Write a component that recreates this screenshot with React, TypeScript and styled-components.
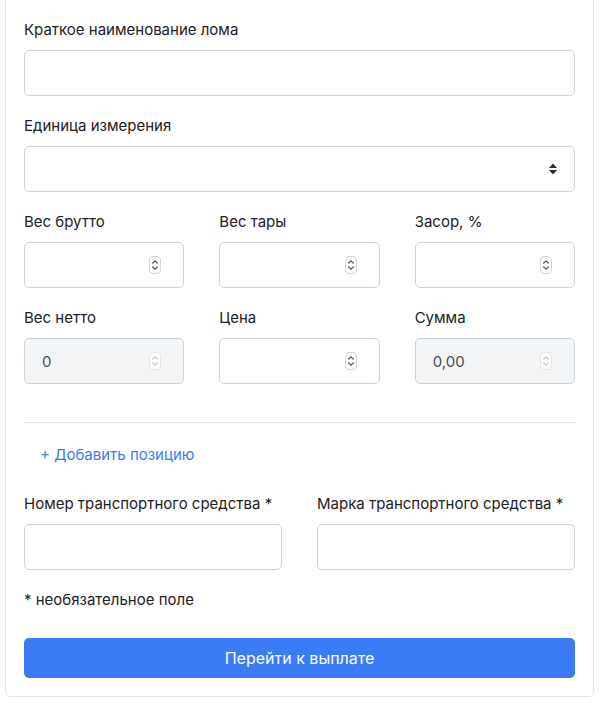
import styled, { createGlobalStyle } from "styled-components";

const GlobalStyle = createGlobalStyle`
  body {
    margin: 0;
    background: #ffffff;
    font-family: Inter, "Noto Sans", sans-serif;
    color: #1d2024;
  }
`;

const Stepper = ({ muted }: { muted?: boolean }) => (
  <svg width="12" height="18" viewBox="0 0 12 18">
    <rect x="0.5" y="0.5" width="11" height="17" rx="3.5" fill="#fdfdfd" stroke={muted ? "#e3e5e8" : "#d3d6da"} />
    <path d="M3.6 7.2 L6 4.8 L8.4 7.2" fill="none" stroke={muted ? "#c4c7cb" : "#4a4d52"} strokeWidth="1.2" strokeLinecap="round" strokeLinejoin="round" />
    <path d="M3.6 10.8 L6 13.2 L8.4 10.8" fill="none" stroke={muted ? "#c4c7cb" : "#4a4d52"} strokeWidth="1.2" strokeLinecap="round" strokeLinejoin="round" />
  </svg>
);

const SelectArrows = () => (
  <svg width="8" height="12" viewBox="0 0 8 12">
    <polygon points="0,5 4,0.5 8,5" fill="#2b2d31" />
    <polygon points="0,7 8,7 4,11.5" fill="#2b2d31" />
  </svg>
);

const NumberField = ({ label, value }: { label: string; value?: string }) => (
  <Field>
    <Label>{label}</Label>
    <NumberBox disabled={value !== undefined}>
      <BareInput defaultValue={value} disabled={value !== undefined} />
      <Stepper muted={value !== undefined} />
    </NumberBox>
  </Field>
);

export default function App() {
  return (
    <>
      <GlobalStyle />
      <Card>
        <Field>
          <Label>Краткое наименование лома</Label>
          <TextInput />
        </Field>
        <Field>
          <Label>Единица измерения</Label>
          <SelectBox>
            <BareSelect>
              <option></option>
            </BareSelect>
            <SelectArrows />
          </SelectBox>
        </Field>
        <Grid cols={3}>
          <NumberField label="Вес брутто" />
          <NumberField label="Вес тары" />
          <NumberField label="Засор, %" />
          <NumberField label="Вес нетто" value="0" />
          <NumberField label="Цена" />
          <NumberField label="Сумма" value="0,00" />
        </Grid>
        <Divider />
        <AddLink>+ Добавить позицию</AddLink>
        <Grid cols={2}>
          <Field>
            <Label>Номер транспортного средства *</Label>
            <TextInput />
          </Field>
          <Field>
            <Label>Марка транспортного средства *</Label>
            <TextInput />
          </Field>
        </Grid>
        <Note>* необязательное поле</Note>
        <SubmitButton>Перейти к выплате</SubmitButton>
      </Card>
    </>
  );
}

const Card = styled.div`
  margin: 0 14px 0 5px;
  padding: 20px 18px 18px;
  border: 1px solid #e4e6e9;
  border-top: none;
  border-radius: 0 0 5px 5px;
  display: flex;
  flex-direction: column;
`;

const Field = styled.div`
  display: flex;
  flex-direction: column;
  gap: 10px;
  margin-bottom: 20px;
  min-width: 0;
`;

const Label = styled.label`
  font-size: 15px;
  line-height: 20px;
  color: #1d2024;
`;

const boxStyles = `
  height: 46px;
  box-sizing: border-box;
  border: 1px solid #ccd3dc;
  border-radius: 5px;
  background: #ffffff;
`;

const TextInput = styled.input`
  ${boxStyles}
  width: 100%;
  min-width: 0;
  padding: 0 16px;
  font: inherit;
  font-size: 15px;
  outline: none;
`;

const SelectBox = styled.div`
  ${boxStyles}
  display: flex;
  align-items: center;
  padding: 0 17px 0 16px;
`;

const BareSelect = styled.select`
  flex: 1;
  appearance: none;
  border: none;
  background: transparent;
  font: inherit;
  font-size: 15px;
  outline: none;
`;

const NumberBox = styled.div<{ disabled?: boolean }>`
  ${boxStyles}
  display: flex;
  align-items: center;
  padding: 0 22px 0 17px;
  background: ${({ disabled }) => (disabled ? "#f3f4f6" : "#ffffff")};
`;

const BareInput = styled.input`
  flex: 1;
  width: 0;
  min-width: 0;
  border: none;
  background: transparent;
  font: inherit;
  font-size: 15px;
  color: #4b4f55;
  outline: none;
  padding: 0;
  &:disabled {
    color: #4b4f55;
    -webkit-text-fill-color: #4b4f55;
  }
`;

const Grid = styled.div<{ cols: number }>`
  display: grid;
  grid-template-columns: repeat(${({ cols }) => cols}, minmax(0, 1fr));
  column-gap: 35px;
`;

const Divider = styled.hr`
  margin: 18px 0 22px;
  border: none;
  border-top: 1px solid #e3e4e6;
`;

const AddLink = styled.a`
  align-self: flex-start;
  padding: 0 16px;
  font-size: 15px;
  line-height: 20px;
  color: #3b7cf5;
  cursor: pointer;
  margin-bottom: 29px;
`;

const Note = styled.p`
  margin: 0 0 28px;
  font-size: 15px;
  line-height: 20px;
  color: #1d2024;
`;

const SubmitButton = styled.button`
  height: 40px;
  border: none;
  border-radius: 5px;
  background: #3b7cf5;
  color: #ffffff;
  font: inherit;
  font-size: 16px;
  cursor: pointer;
`;
